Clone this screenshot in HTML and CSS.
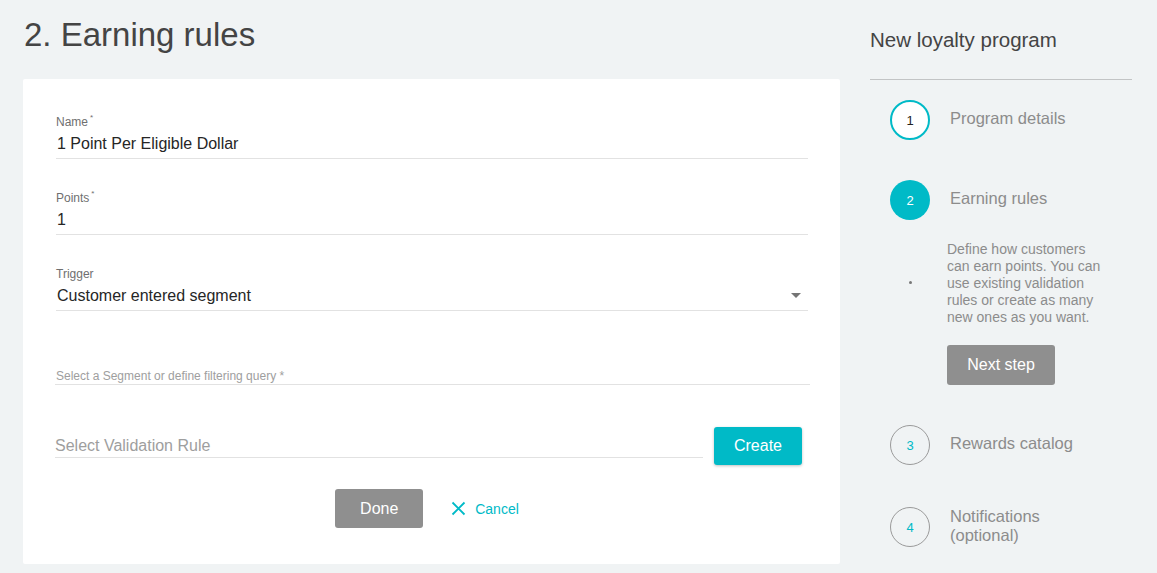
FILE: index.html
```html
<!DOCTYPE html>
<html lang="en">
<head>
    <meta charset="UTF-8">
    <meta name="viewport" content="width=device-width, initial-scale=1.0">
    <title>Earning rules</title>
    <link rel="stylesheet" href="styles.css">
</head>
<body>
    <div class="page">
        <main class="main">
            <h1 class="page-title">2. Earning rules</h1>

            <div class="card">
                <div class="field">
                    <label class="field-label">Name<sup>*</sup></label>
                    <div class="field-value">1 Point Per Eligible Dollar</div>
                </div>

                <div class="field">
                    <label class="field-label">Points<sup>*</sup></label>
                    <div class="field-value">1</div>
                </div>

                <div class="field trigger">
                    <label class="field-label">Trigger</label>
                    <div class="field-value select">
                        <span>Customer entered segment</span>
                        <span class="caret"></span>
                    </div>
                </div>

                <div class="field segment">
                    <div class="small-placeholder">Select a Segment or define filtering query *</div>
                </div>

                <div class="validation-row">
                    <div class="validation-input">Select Validation Rule</div>
                    <button class="btn btn-teal">Create</button>
                </div>

                <div class="actions">
                    <button class="btn btn-gray">Done</button>
                    <a class="cancel" href="#">
                        <svg width="15" height="15" viewBox="0 0 15 15">
                            <path d="M1.5 1.5 L13.5 13.5 M13.5 1.5 L1.5 13.5" stroke="#00bac7" stroke-width="1.8" fill="none"/>
                        </svg>
                        Cancel
                    </a>
                </div>
            </div>
        </main>

        <aside class="sidebar">
            <h2 class="sidebar-title">New loyalty program</h2>

            <div class="steps">
                <div class="step">
                    <div class="step-circle done">1</div>
                    <div class="step-label">Program details</div>
                </div>

                <div class="step">
                    <div class="step-circle active">2</div>
                    <div class="step-label">Earning rules</div>
                </div>

                <div class="step-body">
                    <div class="step-desc">
                        <span class="dot"></span>
                        <p>Define how customers<br>can earn points. You can<br>use existing validation<br>rules or create as many<br>new ones as you want.</p>
                    </div>
                    <button class="btn btn-gray next">Next step</button>
                </div>

                <div class="step step-later">
                    <div class="step-circle">3</div>
                    <div class="step-label">Rewards catalog</div>
                </div>

                <div class="step">
                    <div class="step-circle">4</div>
                    <div class="step-label">Notifications<br>(optional)</div>
                </div>
            </div>
        </aside>
    </div>
</body>
</html>
```

FILE: styles.css
```css
* {
    margin: 0;
    padding: 0;
    box-sizing: border-box;
}

body {
    font-family: "Liberation Sans", Arial, sans-serif;
    background: #f0f3f4;
    color: #333;
    height: 573px;
    overflow: hidden;
}

.page {
    display: flex;
    align-items: flex-start;
    gap: 30px;
    padding-left: 23px;
}

.main {
    width: 817px;
    padding-top: 16px;
}

.page-title {
    font-size: 33px;
    line-height: 38px;
    font-weight: normal;
    color: #444;
    margin-left: 1px;
    margin-bottom: 25px;
}

.card {
    background: white;
    border-radius: 2px;
    padding: 36px 32px 36px 33px;
}

.field {
    border-bottom: 1px solid #e2e2e2;
    padding-bottom: 4px;
    margin-bottom: 32px;
}

.field-label {
    display: block;
    font-size: 12px;
    line-height: 14px;
    color: #6f6f6f;
    margin-bottom: 5px;
}

.field-label sup {
    font-size: 8px;
    vertical-align: 6px;
    margin-left: 2px;
    line-height: 0;
}

.field-value {
    font-size: 16px;
    line-height: 20px;
    color: #262626;
    padding-left: 1px;
}

.field.trigger {
    padding-bottom: 4px;
}

.field-value.select {
    display: flex;
    justify-content: space-between;
    align-items: center;
    margin-top: 1px;
}

.caret {
    width: 0;
    height: 0;
    border-left: 5px solid transparent;
    border-right: 5px solid transparent;
    border-top: 5px solid #757575;
    margin-right: 7px;
    margin-top: -2px;
}

.field.segment {
    margin-bottom: 0;
    margin-right: -2px;
    margin-left: -1px;
    padding-top: 26px;
    padding-bottom: 1px;
}

.small-placeholder {
    font-size: 12px;
    line-height: 14px;
    color: #9e9e9e;
    padding-left: 1px;
}

.validation-row {
    display: flex;
    align-items: flex-end;
    margin-top: 42px;
    margin-right: 6px;
}

.validation-input {
    flex: 1;
    font-size: 16px;
    line-height: 20px;
    color: #9e9e9e;
    border-bottom: 1px solid #e2e2e2;
    padding-bottom: 1px;
    margin-bottom: 7px;
    margin-left: -1px;
}

.btn {
    font-family: inherit;
    font-size: 16px;
    color: white;
    border: none;
    border-radius: 3px;
    cursor: pointer;
}

.btn-teal {
    background: #00bac7;
    width: 88px;
    height: 38px;
    margin-left: 11px;
    box-shadow: 0 1px 3px rgba(0,0,0,0.25);
}

.btn-gray {
    background: #8f8f8f;
    width: 88px;
    height: 39px;
}

.actions {
    display: flex;
    justify-content: center;
    align-items: center;
    gap: 28px;
    margin-top: 24px;
    margin-left: -10px;
}

.cancel {
    display: flex;
    align-items: center;
    gap: 9px;
    color: #00bac7;
    font-size: 14px;
    text-decoration: none;
}

/* sidebar */
.sidebar {
    width: 262px;
    padding-top: 28px;
}

.sidebar-title {
    font-size: 20.5px;
    line-height: 24px;
    font-weight: normal;
    color: #444;
    padding-bottom: 27px;
    border-bottom: 1px solid #c2c4c5;
}

.steps {
    padding: 20px 0 0 20px;
}

.step {
    display: flex;
    align-items: center;
    gap: 20px;
    margin-bottom: 40px;
}

.step-circle {
    width: 40px;
    height: 40px;
    border-radius: 50%;
    border: 1px solid #9a9a9a;
    display: flex;
    align-items: center;
    justify-content: center;
    font-size: 13px;
    color: #00bac7;
    flex-shrink: 0;
}

.step-circle.done {
    background: white;
    border: 2px solid #00bac7;
    color: #222;
}

.step-circle.active {
    background: #00bac7;
    border: none;
    color: white;
}

.step-label {
    font-size: 16.5px;
    line-height: 19px;
    color: #8c8c8c;
    margin-top: -3px;
}

.step-body {
    margin-top: -19px;
    margin-bottom: 40px;
}

.step-desc {
    display: flex;
    align-items: center;
}

.dot {
    width: 3px;
    height: 3px;
    border-radius: 50%;
    background: #777;
    margin-left: 19px;
    margin-right: 35px;
    margin-top: -2px;
}

.step-desc p {
    font-size: 14px;
    line-height: 17px;
    color: #8c8c8c;
}

.next {
    width: 108px;
    height: 40px;
    margin-top: 19px;
    margin-left: 57px;
}

.step-later {
    margin-bottom: 42px;
}
```
